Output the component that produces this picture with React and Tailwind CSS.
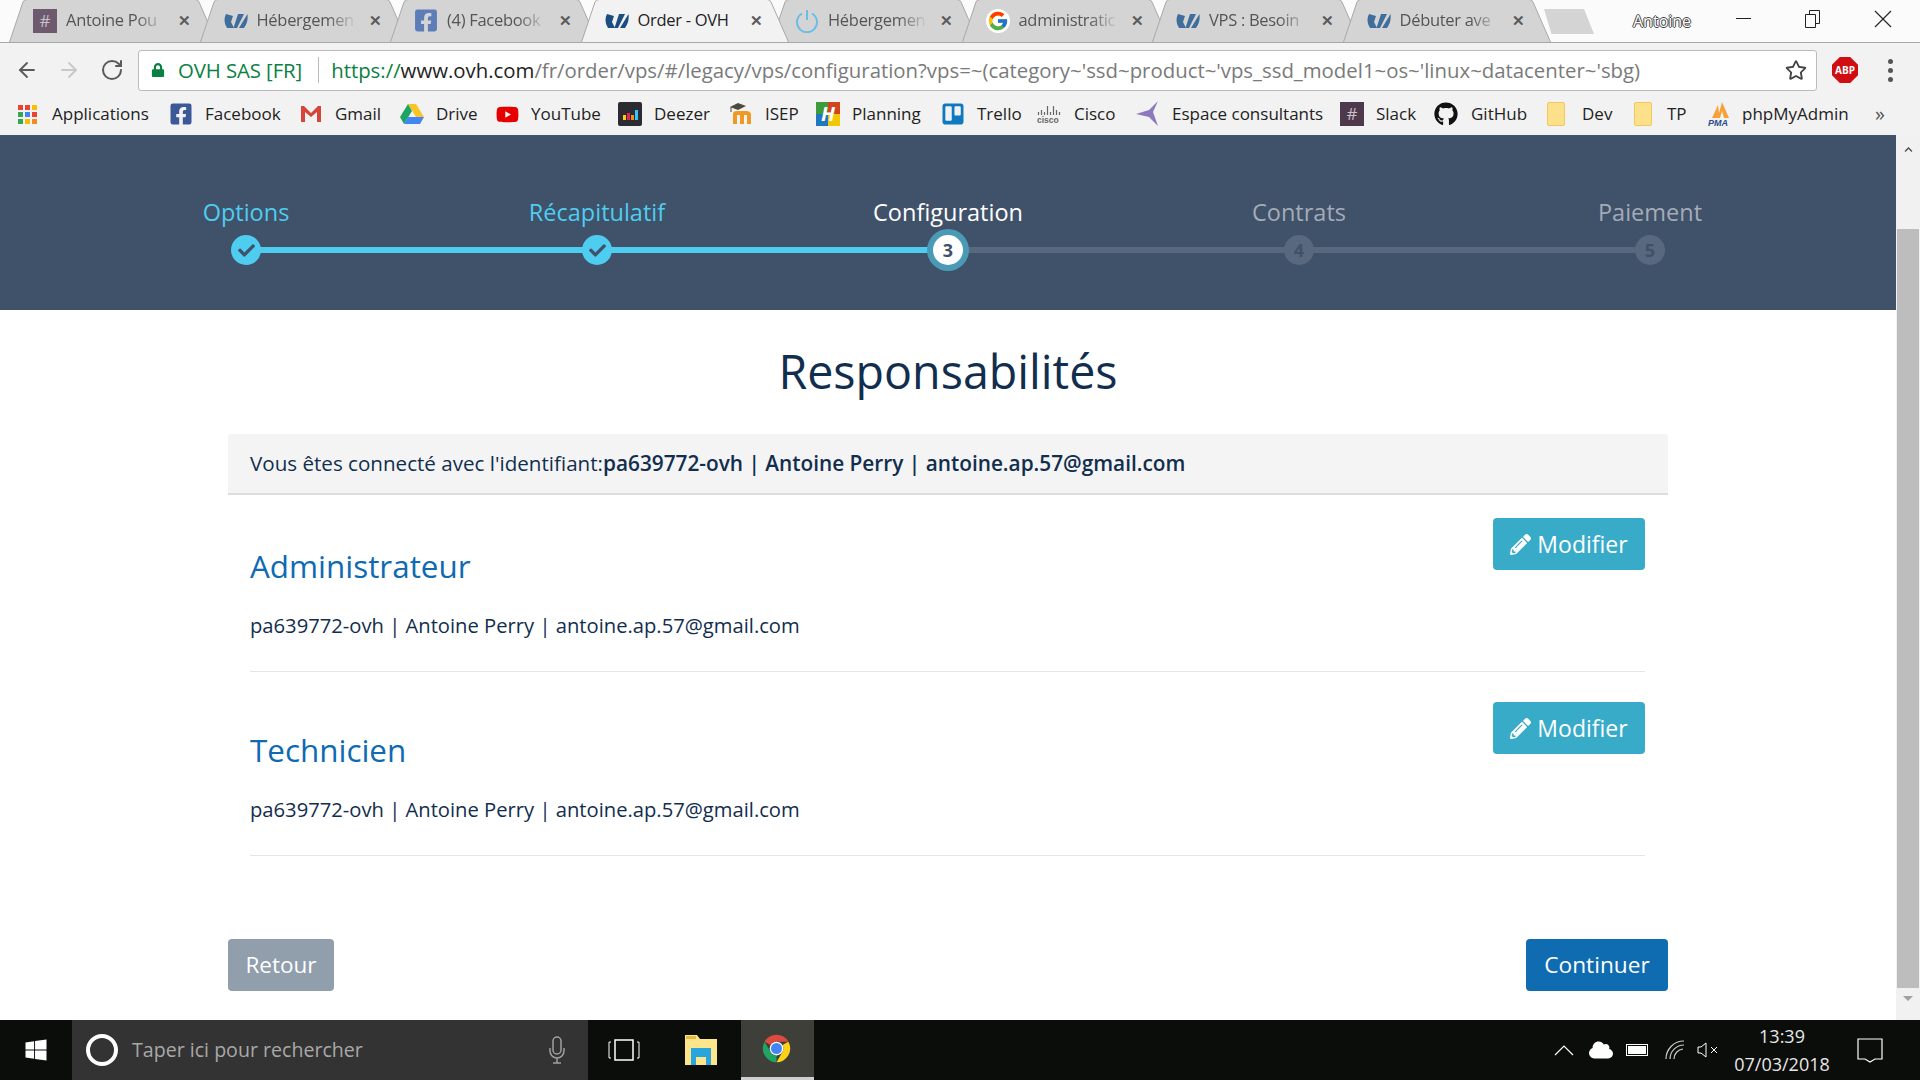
import { FaFacebookSquare, FaGithub, FaYoutube, FaPencilAlt, FaCheck, FaLock, FaRegStar, FaWindows, FaTrello, FaChevronUp, FaCloud } from "react-icons/fa";
import { FcGoogle } from "react-icons/fc";
import { ArrowLeft, ArrowRight, RotateCw } from "lucide-react";

const Ovh = ({ color = "#1b4d80" }) => (
  <svg viewBox="0 0 24 16" className="w-[24px] h-[16px]" fill={color}>
    <path d="M2 1 Q-1.5 8 3 15 H10 L7 9 L9 3 Z" />
    <path d="M9.5 15 H13 L20 1 H14 Z" />
    <path d="M15 15 H20 Q24.5 9 23.5 1 Z" />
  </svg>
);

const Hash = ({ bg }) => (
  <span className={`w-[24px] h-[24px] flex items-center justify-center text-[17px] text-[#c9bfc9] ${bg}`}>#</span>
);

const Power = () => (
  <svg viewBox="0 0 24 24" className="w-[24px] h-[24px]" fill="none" stroke="#69bde8" strokeWidth="2">
    <path d="M7 4.5a10 10 0 1 0 10 0" />
    <path d="M12 1v10" />
  </svg>
);

const tabs = [
  { title: "Antoine Pou", icon: <Hash bg="bg-[#6d5a6e]" /> },
  { title: "Hébergemen", icon: <Ovh color="#3f6d9c" /> },
  { title: "(4) Facebook", icon: <FaFacebookSquare className="text-[#5d7db8] text-[25px]" /> },
  { title: "Order - OVH", icon: <Ovh />, active: true },
  { title: "Hébergemen", icon: <Power /> },
  { title: "administratic", icon: <span className="w-[24px] h-[24px] rounded-full bg-white flex items-center justify-center"><FcGoogle className="text-[22px]" /></span> },
  { title: "VPS : Besoin", icon: <Ovh color="#3f6d9c" /> },
  { title: "Débuter ave", icon: <Ovh color="#3f6d9c" /> },
];

const Tab = ({ title, icon, active }) => (
  <div className={`relative w-[208px] h-[43px] -mr-[17.5px] shrink-0 flex items-center pl-[24px] ${active ? "z-10" : ""}`}>
    <svg viewBox="0 0 208 43" className="absolute inset-0 w-[208px] h-[43px]">
      <path d="M0.5 43 L14 3 Q15 0.5 18 0.5 H186 Q189 0.5 190 3 L207.5 43" fill={active ? "#f2f2f2" : "#d4d4d4"} stroke="#a8a8a8" />
    </svg>
    <span className="relative w-[24px] flex justify-center shrink-0">{icon}</span>
    <span className={`relative ml-[9px] w-[100px] overflow-hidden whitespace-nowrap text-[16.5px] tracking-[-0.3px] ${active ? "text-[#222]" : "text-[#555] [mask-image:linear-gradient(to_right,black_70%,transparent)]"}`}>{title}</span>
    <span className="relative ml-[12px] text-[#5a5a5a] text-[15px] font-semibold">✕</span>
  </div>
);

const Folder = () => <span className="w-[18px] h-[24px] bg-[#fde08a] border border-[#f0c860] rounded-[2px]" />;

const bookmarks = [
  { label: "Applications", w: "w-[151px]", gap: "gap-[15px]", icon: (
    <span className="grid grid-cols-3 gap-[2px] w-[19px]">
      <span className="w-[5px] h-[5px] bg-[#ea4335]" /><span className="w-[5px] h-[5px] bg-[#ea4335]" /><span className="w-[5px] h-[5px] bg-[#fbbc05]" />
      <span className="w-[5px] h-[5px] bg-[#34a853]" /><span className="w-[5px] h-[5px] bg-[#4285f4]" /><span className="w-[5px] h-[5px] bg-[#ea4335]" />
      <span className="w-[5px] h-[5px] bg-[#34a853]" /><span className="w-[5px] h-[5px] bg-[#fbbc05]" /><span className="w-[5px] h-[5px] bg-[#f28b22]" />
    </span>
  ) },
  { label: "Facebook", w: "w-[131px]", gap: "gap-[12px]", icon: <FaFacebookSquare className="text-[#3b5998] text-[24px]" /> },
  { label: "Gmail", w: "w-[100px]", gap: "gap-[13px]", icon: (
    <svg viewBox="0 0 22 18" className="w-[22px] h-[18px]">
      <path d="M1 1 H4 L11 8 L18 1 H21 V17 H17 V7 L11 12 L5 7 V17 H1 Z" fill="#d5453a" />
    </svg>
  ) },
  { label: "Drive", w: "w-[96px]", gap: "gap-[12px]", icon: (
    <svg viewBox="0 0 24 22" className="w-[24px] h-[22px]">
      <path d="M8 1 H16 L24 14 H16 Z" fill="#f7c524" />
      <path d="M8 1 L0 14 L4 21 L12 8 Z" fill="#1fa463" />
      <path d="M4 21 H20 L24 14 H8 Z" fill="#4285f4" />
    </svg>
  ) },
  { label: "YouTube", w: "w-[122px]", gap: "gap-[12px]", icon: <FaYoutube className="text-[#e60000] text-[23px]" /> },
  { label: "Deezer", w: "w-[111px]", gap: "gap-[12px]", icon: (
    <span className="w-[24px] h-[24px] bg-[#2b2b33] rounded-[2px] flex items-end justify-center gap-[1px] pb-[6px]">
      <span className="w-[3px] h-[5px] bg-[#ffce00]" />
      <span className="w-[3px] h-[7px] bg-[#e0245e]" />
      <span className="w-[3px] h-[5px] bg-[#ff8a00]" />
      <span className="w-[3px] h-[10px] bg-[#37c3ff]" />
    </span>
  ) },
  { label: "ISEP", w: "w-[87px]", gap: "gap-[12px]", icon: (
    <svg viewBox="0 0 24 24" className="w-[24px] h-[24px]">
      <path d="M1 5 L9 1 L17 4 L9 8 Z" fill="#4a4a40" />
      <path d="M2 5 V10" stroke="#4a4a40" strokeWidth="1" />
      <path d="M4 22 V12 Q4 9 8 9 H17 Q22 9 22 13 V22 H18 V13 H15 V22 H11 V13 H8 V22 Z" fill="#f09a24" />
    </svg>
  ) },
  { label: "Planning", w: "w-[125px]", gap: "gap-[12px]", icon: (
    <span className="relative w-[24px] h-[24px] grid grid-cols-2 shrink-0">
      <span className="bg-[#3f9a3a]" /><span className="bg-[#d1441f]" />
      <span className="bg-[#1f77c0]" /><span className="bg-[#f2c705]" />
      <span className="absolute inset-0 flex items-center justify-center text-white italic font-bold text-[20px]">H</span>
    </span>
  ) },
  { label: "Trello", w: "w-[96px]", gap: "gap-[12px]", icon: <FaTrello className="text-[#0f79bf] text-[24px]" /> },
  { label: "Cisco", w: "w-[99px]", gap: "gap-[13px]", icon: (
    <svg viewBox="0 0 24 20" className="w-[24px] h-[20px]" stroke="#666" strokeWidth="1.2">
      <path d="M1.5 8 V11 M4.5 6 V11 M7.5 8 V11 M10.5 2 V11 M13.5 8 V11 M16.5 2 V11 M19.5 6 V11 M22.5 8 V11" />
      <text x="0" y="19" fontSize="8.5" fontWeight="700" fill="#666" stroke="none" fontFamily="Liberation Sans">cisco</text>
    </svg>
  ) },
  { label: "Espace consultants", w: "w-[204px]", gap: "gap-[12px]", icon: (
    <svg viewBox="0 0 24 26" className="w-[24px] h-[26px]">
      <path d="M22 0 L17 11 L22 25 L13 16 L0 13 L13 9 Z" fill="#8d79bd" />
    </svg>
  ) },
  { label: "Slack", w: "w-[94px]", gap: "gap-[12px]", icon: <Hash bg="bg-[#4d394b]" /> },
  { label: "GitHub", w: "w-[113px]", gap: "gap-[13px]", icon: <FaGithub className="text-[#111] text-[24px]" /> },
  { label: "Dev", w: "w-[87px]", gap: "gap-[17px]", icon: <Folder /> },
  { label: "TP", w: "w-[74px]", gap: "gap-[15px]", icon: <Folder /> },
  { label: "phpMyAdmin", w: "w-[167px]", gap: "gap-[10px]", icon: (
    <svg viewBox="0 0 24 26" className="w-[24px] h-[26px]">
      <path d="M4 17 L10 4 L11 12 L14 1 L21 17 H16 L14 10 L12 17 Z" fill="#f7a13a" />
      <text x="0" y="25" fontSize="9" fontWeight="700" fontStyle="italic" fill="#2b4c8a" fontFamily="Liberation Sans">PMA</text>
    </svg>
  ) },
];

const steps = [
  { label: "Options", state: "done" },
  { label: "Récapitulatif", state: "done" },
  { label: "Configuration", state: "current", n: 3 },
  { label: "Contrats", state: "todo", n: 4 },
  { label: "Paiement", state: "todo", n: 5 },
];

const Step = ({ label, state, n, index }) => (
  <div className="relative flex flex-col items-center">
    <p className={`text-[23.5px] leading-[32px] ${state === "done" ? "text-[#4fcdf0]" : state === "current" ? "text-white" : "text-[#a3acb6]"}`}>{label}</p>
    <div className="relative mt-[1px] h-[42px] w-full flex items-center justify-center">
      {index < 4 && (
        <span className={`absolute left-1/2 w-full h-[6px] ${index < 2 ? "bg-[#4fcdf0]" : "bg-[#57687f]"}`} />
      )}
      {state === "done" && (
        <span className="relative w-[30px] h-[30px] rounded-full bg-[#4fcdf0] flex items-center justify-center">
          <FaCheck className="text-[#40516a] text-[17px]" />
        </span>
      )}
      {state === "current" && (
        <span className="relative w-[42px] h-[42px] rounded-full bg-[#4b9ab5] flex items-center justify-center">
          <span className="w-[30px] h-[30px] rounded-full bg-white flex items-center justify-center text-[#40516a] font-bold text-[18px]">{n}</span>
        </span>
      )}
      {state === "todo" && (
        <span className="relative w-[30px] h-[30px] rounded-full bg-[#57687f] flex items-center justify-center text-[#40516a] font-bold text-[18px]">{n}</span>
      )}
    </div>
  </div>
);

const Contact = ({ title }) => (
  <section className="ml-[22px] mr-[23px] pb-[30px]">
    <div className="h-[154px] border-b border-[#e4e4e4] flex justify-between items-start">
      <div>
        <h2 className="mt-[24px] text-[31.4px] leading-[48px] text-[#0e6ab2]">{title}</h2>
        <p className="mt-[21px] text-[20.2px] leading-[28px] text-[#122e4e]">pa639772-ovh | Antoine Perry | antoine.ap.57@gmail.com</p>
      </div>
      <button className="w-[152px] h-[52px] rounded-[4px] bg-[#38abc9] text-white text-[23px] flex items-center justify-center gap-[6px]">
        <FaPencilAlt className="text-[21px]" />
        Modifier
      </button>
    </div>
  </section>
);

export default function App() {
  return (
    <div className="w-[1920px] h-[1080px] overflow-hidden flex flex-col bg-white font-['Open_Sans',sans-serif]">
      <div className="h-[43px] shrink-0 flex items-end pl-[9px] bg-[#fbfbfb] border-b border-[#a8a8a8]">
        <div className="flex h-[43px] items-end">
          {tabs.map((t, i) => <Tab key={i} {...t} />)}
        </div>
        <span className="ml-[11px] mb-[8px] w-[50px] h-[25px] bg-[#d4d4d4] [clip-path:polygon(0_0,80%_0,100%_100%,15%_100%)]" />
        <span className="ml-[39px] mb-[9px] text-[16px] text-white [text-shadow:1px_0_0_#444,-1px_0_0_#444,0_1px_0_#444,0_-1px_0_#444]">Antoine</span>
        <div className="ml-auto flex items-center h-[43px] pb-[4px]">
          <span className="w-[15px] h-px bg-[#222] mr-[54px]" />
          <svg viewBox="0 0 16 18" className="w-[16px] h-[18px] mr-[53px]" fill="none" stroke="#222">
            <path d="M0.5 4.5h10v13h-10zM4.5 4.5v-4h10v13h-4" />
          </svg>
          <svg viewBox="0 0 18 18" className="w-[18px] h-[18px] mr-[28px]" stroke="#222" strokeWidth="1.1">
            <path d="M1 1 L17 17 M17 1 L1 17" />
          </svg>
        </div>
      </div>

      <div className="h-[54px] shrink-0 bg-[#f2f2f2] flex items-center">
        <ArrowLeft className="ml-[15px] text-[#5a5a5a]" size={24} strokeWidth={1.8} />
        <ArrowRight className="ml-[18px] text-[#c8c8c8]" size={24} strokeWidth={1.8} />
        <RotateCw className="ml-[19px] text-[#5a5a5a]" size={24} strokeWidth={2} />
        <div className="ml-[14px] w-[1679px] h-[41px] bg-white border border-[#bbb] rounded-[3px] flex items-center">
          <FaLock className="ml-[12px] text-[#0b8043] text-[14px]" />
          <span className="ml-[13px] text-[20.4px] tracking-[-0.1px] text-[#0b8043] whitespace-nowrap">OVH SAS [FR]</span>
          <span className="ml-[16px] w-px h-[26px] bg-[#bbb]" />
          <span className="ml-[12px] text-[20.36px] whitespace-nowrap text-[#7a7a7a]">
            <span className="text-[#0b8043]">https://</span><span className="text-[#222]">www.ovh.com</span>/fr/order/vps/#/legacy/vps/configuration?vps=~(category~'ssd~product~'vps_ssd_model1~os~'linux~datacenter~'sbg)
          </span>
          <FaRegStar className="ml-auto mr-[9px] text-[#444] text-[22px]" />
        </div>
        <span className="ml-[15px] w-[26px] h-[26px] bg-[#d00d10] [clip-path:polygon(30%_0,70%_0,100%_30%,100%_70%,70%_100%,30%_100%,0_70%,0_30%)] flex items-center justify-center text-white text-[10px] font-bold">ABP</span>
        <span className="ml-[30px] flex flex-col gap-[4px]">
          <span className="w-[5px] h-[5px] rounded-full bg-[#555]" />
          <span className="w-[5px] h-[5px] rounded-full bg-[#555]" />
          <span className="w-[5px] h-[5px] rounded-full bg-[#555]" />
        </span>
      </div>

      <div className="h-[38px] shrink-0 bg-[#f2f2f2] flex items-center pl-[18px] pb-[4px]">
        {bookmarks.map((b) => (
          <div key={b.label} className={`${b.w} ${b.gap} shrink-0 flex items-center text-[17px] text-[#222] whitespace-nowrap`}>
            {b.icon}
            <span>{b.label}</span>
          </div>
        ))}
        <span className="text-[20px] text-[#555]">»</span>
      </div>

      <div className="flex-1 min-h-0 flex">
        <main className="w-[1896px] flex flex-col">
          <div className="h-[175px] shrink-0 bg-[#40516a] pt-[61px]">
            <div className="w-[1755px] mx-auto grid grid-cols-5">
              {steps.map((s, i) => <Step key={s.label} {...s} index={i} />)}
            </div>
          </div>

          <h1 className="mt-[27px] text-center text-[46.6px] leading-[68px] text-[#122e4e]">Responsabilités</h1>

          <div className="ml-[228px] w-[1440px] mt-[29px]">
            <div className="h-[61px] bg-[#f4f4f4] border-b-2 border-[#ddd] rounded-t-[3px] px-[22px] flex items-center text-[20.6px] text-[#122e4e]">
              <span>Vous êtes connecté avec l'identifiant:</span>
              <span className="font-semibold text-[20.8px]">pa639772-ovh | Antoine Perry | antoine.ap.57@gmail.com</span>
            </div>
            <div className="mt-[23px]">
              <Contact title="Administrateur" />
              <Contact title="Technicien" />
            </div>
            <div className="mt-[53px] flex justify-between">
              <button className="w-[106px] h-[52px] rounded-[4px] bg-[#919eab] text-white text-[22.5px]">Retour</button>
              <button className="w-[142px] h-[52px] rounded-[4px] bg-[#0f6cb0] text-white text-[22.7px]">Continuer</button>
            </div>
          </div>
        </main>
        <div className="w-[24px] bg-[#f1f1f1] flex flex-col items-center">
          <FaChevronUp className="mt-[10px] text-[#505050] text-[9px]" />
          <span className="mt-[75px] w-[22px] h-[759px] bg-[#bdbdbd]" />
          <span className="mt-[8px] w-0 h-0 border-x-[5px] border-x-transparent border-t-[5px] border-t-[#a0a0a0]" />
        </div>
      </div>

      <div className="h-[60px] shrink-0 bg-[#0b0d0a] flex items-center relative text-white">
        <FaWindows className="ml-[24px] text-[24px]" />
        <div className="ml-[24px] w-[516px] h-full bg-[#333] flex items-center">
          <span className="ml-[14px] w-[32px] h-[32px] rounded-full border-[4px] border-white" />
          <span className="ml-[14px] text-[19.6px] text-[#a8a8a8]">Taper ici pour rechercher</span>
          <svg viewBox="0 0 18 28" className="ml-auto mr-[22px] w-[18px] h-[28px]" fill="none" stroke="#a0a0a0" strokeWidth="1.5">
            <rect x="5" y="1" width="8" height="17" rx="4" />
            <path d="M2 12v3a7 7 0 0 0 14 0v-3M9 22v5M5 27h8" />
          </svg>
        </div>
        <svg viewBox="0 0 32 22" className="ml-[20px] w-[32px] h-[22px]" fill="none" stroke="white" strokeWidth="1.5">
          <rect x="7" y="1" width="18" height="20" />
          <path d="M3 3H1v16h2M29 3h2v16h-2" strokeWidth="1" />
        </svg>
        <svg viewBox="0 0 32 30" className="ml-[45px] w-[32px] h-[30px]">
          <path d="M0 0h12l3 4h17v26H0z" fill="#fde58c" />
          <path d="M1 1h10v3H1z" fill="#e6b93f" />
          <path d="M6 13h20v17h-5v-8H11v8H6z" fill="#2aa4dc" />
        </svg>
        <div className="ml-[24px] w-[73px] h-full bg-[#3f3f3a] border-b-[3px] border-[#cfcfcf] flex items-center justify-center pr-[3px]">
          <svg viewBox="0 0 48 48" className="w-[33px] h-[33px]">
            <path d="M6.68 14 A20 20 0 0 1 41.32 14 L24 14 A10 10 0 0 0 15.34 19 Z" fill="#dd4b3e" />
            <path d="M6.68 14 A20 20 0 0 1 41.32 14 L24 14 A10 10 0 0 0 15.34 19 Z" fill="#fcd116" transform="rotate(120 24 24)" />
            <path d="M6.68 14 A20 20 0 0 1 41.32 14 L24 14 A10 10 0 0 0 15.34 19 Z" fill="#1fa463" transform="rotate(240 24 24)" />
            <circle cx="24" cy="24" r="10" fill="white" />
            <circle cx="24" cy="24" r="8" fill="#4285f4" />
          </svg>
        </div>
        <div className="ml-auto flex items-center">
          <svg viewBox="0 0 20 12" className="w-[20px] h-[12px]" fill="none" stroke="white" strokeWidth="1.2"><path d="M1 11 L10 2 L19 11" /></svg>
          <FaCloud className="ml-[15px] text-[24px]" />
          <span className="ml-[13px] w-[22px] h-[12px] border border-white p-[1px] flex"><span className="flex-1 bg-white" /></span>
          <svg viewBox="0 0 20 20" className="ml-[17px] w-[20px] h-[20px]" fill="none" stroke="#ccc" strokeWidth="1.2">
            <path d="M1 19a18 18 0 0 1 18-18M5 19a14 14 0 0 1 14-14M9 19a10 10 0 0 1 9-10" />
          </svg>
          <svg viewBox="0 0 22 16" className="ml-[12px] w-[22px] h-[16px]" fill="none" stroke="white" strokeWidth="1">
            <path d="M1 5h3l5-4v14l-5-4H1zM14 5l6 6M20 5l-6 6" />
          </svg>
          <div className="ml-[18px] w-[90px] flex flex-col items-center text-[18px] leading-[28px] text-[#e6e6e6]">
            <span>13:39</span>
            <span>07/03/2018</span>
          </div>
          <svg viewBox="0 0 26 26" className="ml-[30px] mr-[37px] w-[26px] h-[26px]" fill="none" stroke="white" strokeWidth="1.2">
            <path d="M1 2h24v20h-7l-5 3-5-3H1z" />
          </svg>
        </div>
      </div>
    </div>
  );
}
